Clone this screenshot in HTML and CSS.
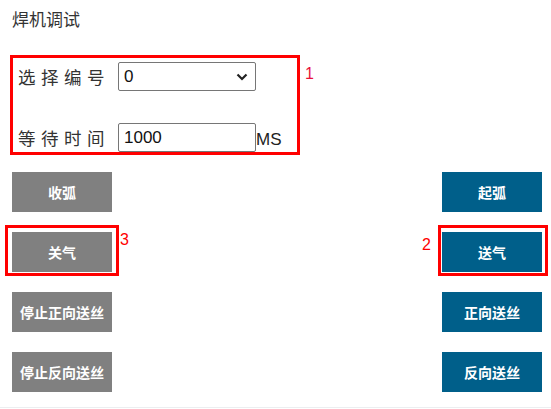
FILE: index.html
```html
<!DOCTYPE html>
<html>
<head>
<meta charset="utf-8">
<link rel="stylesheet" href="styles.css">
</head>
<body>
<div class="page">
  <div class="title">焊机调试</div>
  <div class="form-wrap">
    <div class="form-box">
      <div class="row">
        <span class="label">选择编号</span>
        <div class="select"><span>0</span>
          <svg class="chev" width="12" height="8" viewBox="0 0 12 8"><path d="M1.5 1.5 L6 6 L10.5 1.5" fill="none" stroke="#222" stroke-width="2.2"/></svg>
        </div>
      </div>
      <div class="row row2">
        <span class="label">等待时间</span>
        <div class="input">1000</div>
        <span class="unit">MS</span>
      </div>
    </div>
    <span class="anno anno1">1</span>
  </div>
  <div class="buttons">
    <div class="btn grey">收弧</div>
    <div class="btn blue">起弧</div>
    <div class="mark mark3"><div class="btn grey">关气</div><span class="box"></span><span class="anno anno3">3</span></div>
    <div class="mark mark2"><div class="btn blue">送气</div><span class="box"></span><span class="anno anno2">2</span></div>
    <div class="btn grey">停止正向送丝</div>
    <div class="btn blue">正向送丝</div>
    <div class="btn grey">停止反向送丝</div>
    <div class="btn blue">反向送丝</div>
  </div>
  <div class="bottom-line"></div>
</div>
</body>
</html>
```
FILE: styles.css
```css
html, body { margin: 0; padding: 0; background: #fff; }
body { font-family: "Noto Sans CJK SC", "Liberation Sans", sans-serif; }
.page { width: 551px; height: 409px; position: relative; overflow: hidden; }
.title { font-size: 17px; color: #333; padding: 7px 0 0 12px; height: 28px; line-height: 24px; }
.form-wrap { position: relative; margin: 20px 0 0 10px; width: 290px; }
.form-box { border: 3px solid #f00; box-sizing: border-box; width: 290px; height: 100px; padding: 4px 0 0 5px; }
.row { display: flex; align-items: center; height: 29px; }
.row2 { margin-top: 32px; }
.label { font-size: 17.5px; letter-spacing: 5.5px; color: #333; width: 100px; flex: none; white-space: nowrap; font-family: "Noto Sans CJK SC", sans-serif; }
.select, .input { width: 138px; height: 29px; box-sizing: border-box; border: 1px solid #767676; border-radius: 2px; font-family: "Liberation Sans", Arial, sans-serif; font-size: 17px; color: #111; display: flex; align-items: center; padding-left: 5px; flex: none; }
.select { justify-content: space-between; padding-right: 7px; }
.unit { font-family: "Liberation Sans", Arial, sans-serif; font-size: 17px; color: #222; margin-top: 4px; }
.anno { position: absolute; font-family: "Liberation Sans", Arial, sans-serif; font-size: 16px; color: #f00; line-height: 16px; }
.anno1 { left: 295px; top: 11px; color: #e8103a; }
.buttons { display: grid; grid-template-columns: 100px 100px; justify-content: space-between; row-gap: 20px; margin: 17px 9px 0 12px; }
.btn { width: 100px; height: 40px; display: flex; align-items: center; justify-content: center; color: #fff; font-weight: bold; font-size: 14px; font-family: "Noto Sans CJK SC", sans-serif; letter-spacing: 0; }
.grey { background: #808080; }
.blue { background: #005f8a; }
.mark { position: relative; }
.box { position: absolute; border: 3px solid #f00; box-sizing: border-box; }
.mark3 .box { left: -7px; top: -7px; width: 114px; height: 51px; }
.mark2 .box { left: -4px; top: -7px; width: 110px; height: 51px; }
.anno3 { left: 108px; top: 0px; }
.anno2 { left: -20px; top: 5px; }
.bottom-line { position: absolute; left: 0; right: 0; top: 407px; height: 1px; background: #eceef0; }
```
